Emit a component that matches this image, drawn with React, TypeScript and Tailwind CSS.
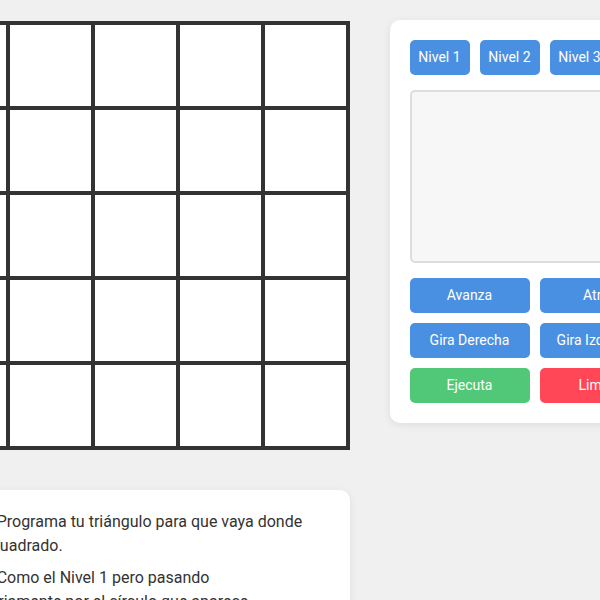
import React from "react";

const cells = Array.from({ length: 25 });

export default function App() {
  return (
    <div
      className="min-h-[600px] w-[600px] overflow-hidden bg-[#f0f0f0] text-[#333]"
      style={{ fontFamily: "Roboto, 'Noto Sans', sans-serif" }}
    >
      <div className="flex justify-center gap-[40px] pt-[20px]">
        <div className="flex w-[429px] shrink-0 flex-col gap-[40px]">
          <div className="mt-[1px] grid h-[429px] w-[429px] grid-cols-5 grid-rows-5 gap-[4px] bg-[#333] p-[4px]">
            {cells.map((_, i) => (
              <div key={i} className="bg-white" />
            ))}
          </div>
          <div className="rounded-[10px] bg-white p-[20px] text-[16px] leading-[24px] shadow-[0_2px_8px_rgba(0,0,0,0.08)]">
            <p className="mb-[8px]">
              <span>Nivel 1: </span>Programa tu triángulo para que vaya donde está el cuadrado.
            </p>
            <p className="mb-[8px]">
              <span>Nivel 2: </span>Como el Nivel 1 pero pasando obligatoriamente por el círculo que aparece.
            </p>
          </div>
        </div>
        <div className="flex h-[403px] w-[290px] shrink-0 flex-col rounded-[10px] bg-white p-[20px] shadow-[0_2px_8px_rgba(0,0,0,0.08)]">
          <div className="flex gap-[10px]">
            {["Nivel 1", "Nivel 2", "Nivel 3"].map((n) => (
              <button
                key={n}
                className="flex h-[35px] w-[60px] items-center justify-center rounded-[5px] bg-[#4a90e2] text-[14px] text-white"
              >
                {n}
              </button>
            ))}
          </div>
          <div className="mt-[15px] h-[174px] w-[250px] rounded-[5px] border-2 border-[#ddd] bg-[#f7f7f7]" />
          <div className="mt-[15px] grid grid-cols-2 gap-[10px]">
            <button className="flex h-[35px] items-center justify-center rounded-[5px] bg-[#4a90e2] text-[14px] text-white">Avanza</button>
            <button className="flex h-[35px] items-center justify-center rounded-[5px] bg-[#4a90e2] text-[14px] text-white">Atrás</button>
            <button className="flex h-[35px] items-center justify-center rounded-[5px] bg-[#4a90e2] text-[14px] text-white">Gira Derecha</button>
            <button className="flex h-[35px] items-center justify-center rounded-[5px] bg-[#4a90e2] text-[14px] text-white">Gira Izquierda</button>
            <button className="flex h-[35px] items-center justify-center rounded-[5px] bg-[#50c878] text-[14px] text-white">Ejecuta</button>
            <button className="flex h-[35px] items-center justify-center rounded-[5px] bg-[#ff4757] text-[14px] text-white">Limpia</button>
          </div>
        </div>
      </div>
    </div>
  );
}
